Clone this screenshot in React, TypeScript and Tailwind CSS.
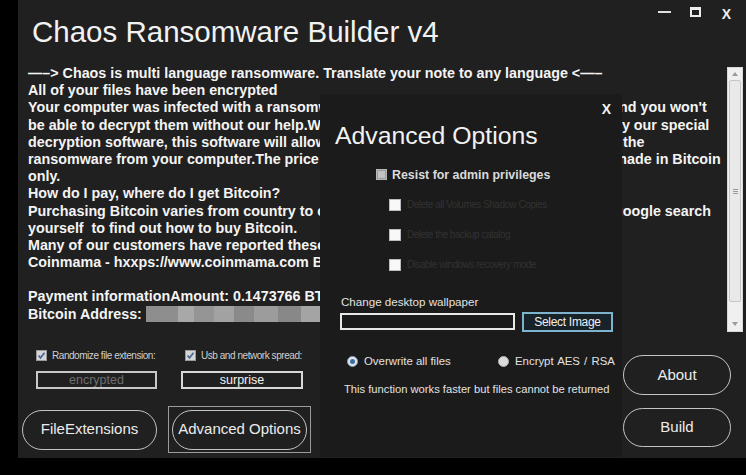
import React from "react";

const lines = [
  "\u2014\u2013> Chaos is multi language ransomware. Translate your note to any language <\u2014\u2013",
  "All of your files have been encrypted",
  "Your computer was infected with a ransomware virus. Your files have been encrypted and you won't",
  "be able to decrypt them without our help.What can I do to get my files back?You can buy our special",
  "decryption software, this software will allow you to recover all of your data and remove the",
  "ransomware from your computer.The price for the software is $1,500. Payment can be made in Bitcoin",
  "only.",
  "How do I pay, where do I get Bitcoin?",
  "Purchasing Bitcoin varies from country to country, you are best advised to do a quick google search",
  "yourself  to find out how to buy Bitcoin.",
  "Many of our customers have reported these sites to be fast and reliable:",
  "Coinmama - hxxps://www.coinmama.com Bitpanda - hxxps://www.bitpanda.com",
  "",
  "Payment informationAmount: 0.1473766 BTC",
];

const blur = [
  ["w-[32px]", "bg-[#8e8e8e]"],
  ["w-[16px]", "bg-[#a8a8a8]"],
  ["w-[20px]", "bg-[#959595]"],
  ["w-[20px]", "bg-[#a2a2a2]"],
  ["w-[20px]", "bg-[#8a8a8a]"],
  ["w-[24px]", "bg-[#9c9c9c]"],
  ["w-[23px]", "bg-[#888888]"],
  ["w-[40px]", "bg-[#a4a4a4]"],
];

function CheckedBox() {
  return (
    <svg width="11" height="11" viewBox="0 0 11 11" className="shrink-0">
      <rect x="0.5" y="0.5" width="10" height="10" fill="#d6d6d6" stroke="#9a9a9a" />
      <path d="M2.5 5.5 L4.5 7.8 L8.5 2.8" fill="none" stroke="#4d6a96" strokeWidth="1.8" />
    </svg>
  );
}

function PillButton({ label, w, h }: { label: string; w: string; h: string }) {
  return (
    <div
      className={`${w} ${h} rounded-full border-[1.5px] border-[#c4c4c4] flex items-center justify-center text-[15px] text-[#ececec]`}
    >
      {label}
    </div>
  );
}

export default function App() {
  return (
    <div className="w-[746px] h-[475px] bg-black flex font-['Liberation_Sans',Arial,sans-serif] overflow-hidden">
      <div className="w-[18px] shrink-0" />
      <div className="relative w-[728px] h-[458px] bg-[#202020] flex flex-col">
        {/* header */}
        <div className="h-[64px] flex justify-between items-start">
          <div className="pl-[14px] pt-[17px] text-[29.5px] leading-none text-[#f2f2f2]">
            Chaos Ransomware Builder v4
          </div>
          <div className="flex items-start pt-[7px] pr-[15px]">
            <div className="w-[13px] h-[2px] bg-[#e0e0e0] mt-[4px]" />
            <div className="ml-[19px] w-[11px] h-[10px] border-2 border-t-[3px] border-[#ececec]" />
            <div className="ml-[21px] text-[14px] font-bold leading-none text-[#f0f0f0]">X</div>
          </div>
        </div>

        {/* note text area */}
        <div className="flex h-[268px]">
          <div className="flex-1 pl-[10px] pt-[1px] overflow-hidden text-[14.3px] font-bold leading-[17.2px] text-[#f4f4f4]">
            {lines.map((l, i) => (
              <div key={i} className="h-[17.2px] whitespace-pre">
                {l}
              </div>
            ))}
            <div className="h-[17.2px] flex items-center whitespace-pre">
              <span>Bitcoin Address:</span>
              <div className="ml-[4px] flex h-[16px]">
                {blur.map(([w, c], i) => (
                  <div key={i} className={`${w} ${c} h-full`} />
                ))}
              </div>
            </div>
          </div>
          <div className="w-[16px] h-[265px] mt-[3px] mr-[3px] bg-[#f0f0f0] border border-[#d8d8d8] flex flex-col items-center">
            <div className="h-[12px] flex items-center justify-center">
              <svg width="6" height="4" viewBox="0 0 6 4">
                <path d="M0 4 L3 0 L6 4 Z" fill="#9a9a9a" />
              </svg>
            </div>
            <div className="w-[12px] h-[222px] bg-[#e9e9e9] border border-[#c6c6c6] rounded-[2px] flex flex-col items-center justify-center gap-[1px]">
              <div className="w-[5px] h-[1px] bg-[#9a9a9a]" />
              <div className="w-[5px] h-[1px] bg-[#9a9a9a]" />
              <div className="w-[5px] h-[1px] bg-[#9a9a9a]" />
            </div>
            <div className="flex-1" />
            <div className="h-[14px] flex items-center justify-center">
              <svg width="6" height="4" viewBox="0 0 6 4">
                <path d="M0 0 L3 4 L6 0 Z" fill="#9a9a9a" />
              </svg>
            </div>
          </div>
        </div>

        {/* bottom area */}
        <div className="flex-1 flex justify-between">
          <div className="pt-[18px]">
            <div className="flex h-[11px] items-center text-[10px] tracking-[-0.45px] text-[#cfcfcf]">
              <div className="ml-[18px] w-[149px] flex items-center">
                <CheckedBox />
                <span className="ml-[5px]">Randomize file extension:</span>
              </div>
              <div className="flex items-center">
                <CheckedBox />
                <span className="ml-[5px]">Usb and network spread:</span>
              </div>
            </div>
            <div className="flex mt-[10px]">
              <div className="ml-[18px] w-[121px] h-[18px] border-2 border-[#c8c8c8] flex items-center justify-center text-[12.5px] text-[#6e6e6e]">
                encrypted
              </div>
              <div className="ml-[24px] w-[122px] h-[18px] border-2 border-[#d8d8d8] flex items-center justify-center text-[12.5px] text-[#f0f0f0]">
                surprise
              </div>
            </div>
            <div className="flex items-center mt-[17px]">
              <div className="ml-[4px]">
                <PillButton label="FileExtensions" w="w-[135px]" h="h-[40px]" />
              </div>
              <div className="ml-[11px] w-[143px] h-[47px] border border-[#9c9c9c] flex items-center justify-center">
                <PillButton label="Advanced Options" w="w-[135px]" h="h-[40px]" />
              </div>
            </div>
          </div>
          <div className="pt-[23px] pr-[15px] flex flex-col gap-[13px]">
            <PillButton label="About" w="w-[108px]" h="h-[40px]" />
            <PillButton label="Build" w="w-[108px]" h="h-[39px]" />
          </div>
        </div>

        {/* Advanced Options dialog */}
        <div className="absolute left-[302px] top-[94px] w-[302px] h-[363px] bg-[#1b1b1b] flex flex-col text-[#e6e6e6]">
          <div className="h-[29px] flex justify-end pr-[11px] pt-[8px]">
            <span className="text-[14px] font-bold leading-none text-[#f4f4f4]">X</span>
          </div>
          <div className="pl-[15px] pt-[1px] text-[24.8px] leading-none text-[#f2f2f2]">Advanced Options</div>
          <div className="flex items-center h-[12px] mt-[20px] pl-[56px]">
            <div className="w-[11px] h-[11px] bg-[#9c9c9c] border border-[#b8b8b8] flex items-center justify-center">
              <div className="w-[7px] h-[7px] bg-[#c2c2c2]" />
            </div>
            <span className="ml-[5px] text-[12.4px] font-bold text-[#dadada]">Resist for admin privileges</span>
          </div>
          {["Delete all Volumes Shadow Copies", "Delete the backup catalog", "Disable windows recovery mode"].map(
            (t) => (
              <div key={t} className="flex items-center h-[12px] mt-[18px] pl-[69px]">
                <div className="w-[12px] h-[12px] bg-[#f8f8f8] border border-[#bcbcbc]" />
                <span className="ml-[6px] text-[10px] tracking-[-0.5px] text-[#323232]">{t}</span>
              </div>
            )
          )}
          <div className="h-[14px] mt-[24px] pl-[21px] flex items-center text-[11.6px] text-[#e2e2e2]">
            Change desktop wallpaper
          </div>
          <div className="flex items-center h-[20px] mt-[3px]">
            <div className="ml-[20px] w-[175px] h-[17px] border-2 border-[#e8e8e8]" />
            <div className="ml-[7px] w-[91px] h-[20px] border-2 border-[#7db3cc] bg-[#182229] flex items-center justify-center text-[12px] tracking-[-0.3px] text-[#f0f0f0]">
              Select Image
            </div>
          </div>
          <div className="flex items-center h-[12px] mt-[24px] text-[11.4px] text-[#e2e2e2]">
            <div className="ml-[27px] w-[11px] h-[11px] rounded-full bg-[#dfe6ee] border border-[#8aa2bb] flex items-center justify-center">
              <div className="w-[5px] h-[5px] rounded-full bg-[#3f6c9c]" />
            </div>
            <span className="ml-[6px] w-[134px]">Overwrite all files</span>
            <div className="w-[11px] h-[11px] rounded-full bg-[#dcdcdc] border border-[#b0b0b0]" />
            <span className="ml-[6px] [word-spacing:1px]">Encrypt AES / RSA</span>
          </div>
          <div className="h-[14px] mt-[15px] pl-[24px] flex items-center text-[11.2px] text-[#e2e2e2]">
            This function works faster but files cannot be returned
          </div>
        </div>
      </div>
    </div>
  );
}
